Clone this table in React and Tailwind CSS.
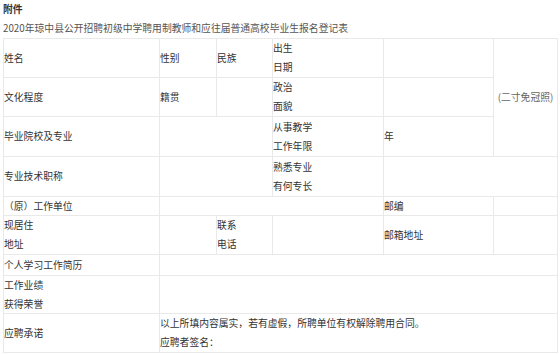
import React from "react";

function Cell({ className = "", children }) {
  return (
    <div className={"bg-white flex flex-col justify-center items-start leading-[19px] overflow-hidden " + className}>
      {children}
    </div>
  );
}

export default function App() {
  return (
    <div
      className="w-[560px] h-[354px] bg-white overflow-hidden px-[3px] text-[9.8px] text-[#333]"
      style={{ fontFamily: '"Noto Sans CJK SC", "Noto Sans", sans-serif' }}
    >
      <div className="leading-[18px] font-bold text-[#333]">附件</div>
      <div className="leading-[20px] text-[#555] whitespace-nowrap">
        2020年琼中县公开招聘初级中学聘用制教师和应往届普通高校毕业生报名登记表
      </div>
      <div className="grid w-[555px] bg-[#e9e9e9] p-px gap-px grid-cols-[155px_56px_55px_110px_109px_63px] grid-rows-[38px_38px_39px_39px_18px_38px_20px_37px_38px]">
        {/* Row 1 */}
        <Cell className="col-start-1 row-start-1">姓名</Cell>
        <Cell className="col-start-2 row-start-1">性别</Cell>
        <Cell className="col-start-3 row-start-1">民族</Cell>
        <Cell className="col-start-4 row-start-1">
          <span>出生</span>
          <span>日期</span>
        </Cell>
        <Cell className="col-start-5 row-start-1" />
        <div className="col-start-6 row-start-1 row-span-3 bg-white flex items-center justify-center text-[#666] whitespace-nowrap">
          (二寸免冠照)
        </div>

        {/* Row 2 */}
        <Cell className="col-start-1 row-start-2">文化程度</Cell>
        <Cell className="col-start-2 row-start-2">籍贯</Cell>
        <Cell className="col-start-3 row-start-2" />
        <Cell className="col-start-4 row-start-2">
          <span>政治</span>
          <span>面貌</span>
        </Cell>
        <Cell className="col-start-5 row-start-2" />

        {/* Row 3 */}
        <Cell className="col-start-1 row-start-3">毕业院校及专业</Cell>
        <Cell className="col-start-2 col-span-2 row-start-3" />
        <Cell className="col-start-4 row-start-3">
          <span>从事教学</span>
          <span>工作年限</span>
        </Cell>
        <Cell className="col-start-5 row-start-3">年</Cell>

        {/* Row 4 */}
        <Cell className="col-start-1 row-start-4">专业技术职称</Cell>
        <Cell className="col-start-2 col-span-2 row-start-4" />
        <Cell className="col-start-4 row-start-4">
          <span>熟悉专业</span>
          <span>有何专长</span>
        </Cell>
        <Cell className="col-start-5 col-span-2 row-start-4" />

        {/* Row 5 */}
        <Cell className="col-start-1 row-start-5">（原）工作单位</Cell>
        <Cell className="col-start-2 col-span-3 row-start-5" />
        <Cell className="col-start-5 row-start-5">邮编</Cell>
        <Cell className="col-start-6 row-start-5" />

        {/* Row 6 */}
        <Cell className="col-start-1 row-start-6">
          <span>现居住</span>
          <span>地址</span>
        </Cell>
        <Cell className="col-start-2 row-start-6" />
        <Cell className="col-start-3 row-start-6">
          <span>联系</span>
          <span>电话</span>
        </Cell>
        <Cell className="col-start-4 row-start-6" />
        <Cell className="col-start-5 row-start-6">邮箱地址</Cell>
        <Cell className="col-start-6 row-start-6" />

        {/* Row 7 */}
        <Cell className="col-start-1 row-start-7">个人学习工作简历</Cell>
        <Cell className="col-start-2 col-span-5 row-start-7" />

        {/* Row 8 */}
        <Cell className="col-start-1 row-start-8">
          <span>工作业绩</span>
          <span>获得荣誉</span>
        </Cell>
        <Cell className="col-start-2 col-span-5 row-start-8" />

        {/* Row 9 */}
        <Cell className="col-start-1 row-start-9">应聘承诺</Cell>
        <Cell className="col-start-2 col-span-5 row-start-9">
          <span>以上所填内容属实，若有虚假，所聘单位有权解除聘用合同。</span>
          <span>应聘者签名：</span>
        </Cell>
      </div>
    </div>
  );
}
